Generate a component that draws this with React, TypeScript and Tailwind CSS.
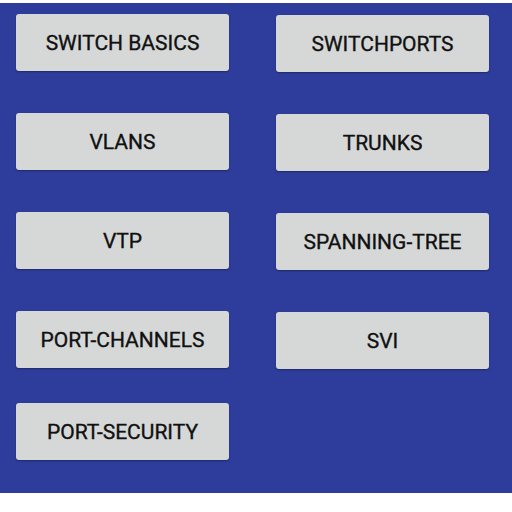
import React from 'react';

const leftTopics = ['SWITCH BASICS', 'VLANS', 'VTP', 'PORT-CHANNELS'];
const rightTopics = ['SWITCHPORTS', 'TRUNKS', 'SPANNING-TREE', 'SVI'];

const TopicButton: React.FC<{ label: string; className?: string }> = ({ label, className = '' }) => (
  <button
    className={`h-[57px] w-[213px] rounded-[3px] bg-[#d6d8d8] pt-[2px] text-[21px] font-normal text-[#111] [-webkit-text-stroke:0.35px_#111] shadow-[0_1px_2px_rgba(0,0,0,0.35)] ${className}`}
  >
    {label}
  </button>
);

export default function App() {
  return (
    <div className="h-[512px] w-[512px] bg-white pt-[3px]" style={{ fontFamily: 'Roboto, "Liberation Sans", sans-serif' }}>
      <div className="flex h-[490px] bg-[#2e3d9c] pl-[16px]">
        {/* left column */}
        <div className="flex flex-col gap-[42px] pt-[11px]">
          {leftTopics.map((t) => (
            <TopicButton key={t} label={t} />
          ))}
          <TopicButton label="PORT-SECURITY" className="-mt-[7px]" />
        </div>
        {/* right column */}
        <div className="ml-[47px] flex flex-col gap-[42px] pt-[12px]">
          {rightTopics.map((t) => (
            <TopicButton key={t} label={t} className="w-[212px]" />
          ))}
        </div>
      </div>
    </div>
  );
}
